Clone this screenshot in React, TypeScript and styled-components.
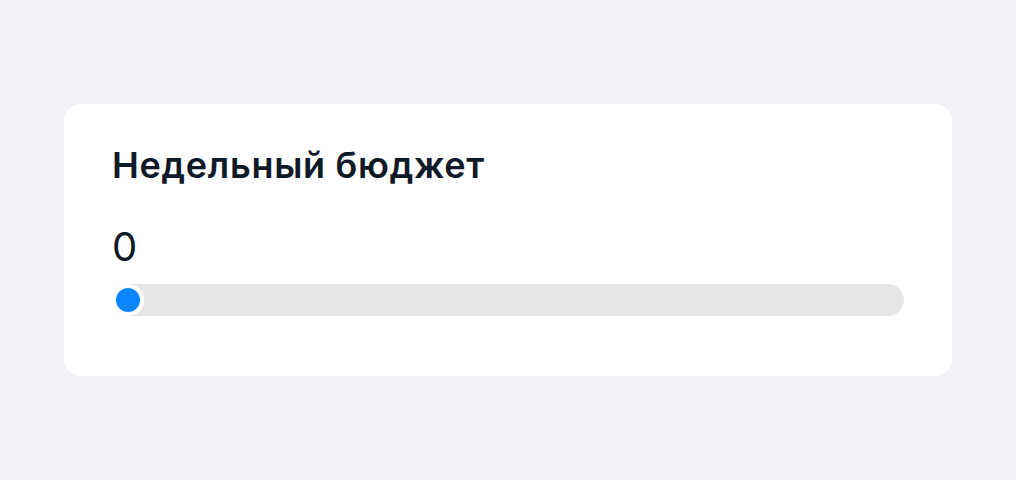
import React, { useState } from 'react'
import styled, { createGlobalStyle } from 'styled-components';

const GlobalStyle = createGlobalStyle`
  html, body {
    margin: 0;
    padding: 0;
    background: #f2f3f7;
  }

  body {
    font-family: Inter, "Noto Sans", "Liberation Sans", sans-serif;
    -webkit-font-smoothing: antialiased;
  }
`

function App() {
  const [budget, setBudget] = useState<number>(0);

  const handleChange = (e: React.ChangeEvent<HTMLInputElement>): void => {
    setBudget(Number(e.target.value));
  }

  return (
    <>
      <GlobalStyle />
      <Page>
        <Card>
          <Title>Недельный бюджет</Title>
          <Value>{budget}</Value>
          <Range
            type="range"
            min={0}
            max={10000}
            step={100}
            value={budget}
            onChange={handleChange}
          />
        </Card>
      </Page>
    </>
  )
}

export default App;

const Page = styled.div`
  padding: 104px 64px;
  min-height: 480px;
  box-sizing: border-box;
`

const Card = styled.div`
  display: flex;
  flex-direction: column;
  background: #fff;
  border-radius: 16px;
  padding: 41px 48px 60px;
`

const Title = styled.h2`
  margin: 0;
  font-size: 36px;
  line-height: 40px;
  font-weight: 600;
  letter-spacing: 0.7px;
  color: #0e1a27;
`

const Value = styled.div`
  margin-top: 38px;
  font-size: 40px;
  line-height: 48px;
  font-weight: 400;
  color: #0e1a27;
`

const Range = styled.input`
  -webkit-appearance: none;
  appearance: none;
  display: block;
  width: 100%;
  height: 32px;
  margin: 13px 0 0;
  padding: 0;
  border-radius: 16px;
  background: #e5e6e8;
  outline: none;

  &::-webkit-slider-thumb {
    -webkit-appearance: none;
    appearance: none;
    box-sizing: border-box;
    width: 32px;
    height: 32px;
    border-radius: 50%;
    background: #0a87ff;
    border: 4px solid #fff;
    cursor: pointer;
  }
`
